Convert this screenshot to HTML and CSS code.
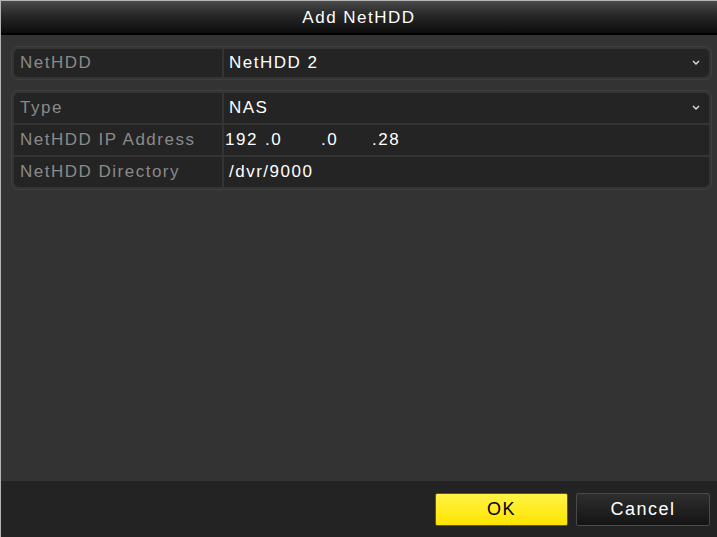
FILE: index.html
```html
<!DOCTYPE html>
<html lang="en">
<head>
<meta charset="UTF-8">
<meta name="viewport" content="width=device-width, initial-scale=1.0">
<title>Add NetHDD</title>
<link rel="stylesheet" href="styles.css">
</head>
<body>

<div class="dialog">
    <div class="dialog-title">Add NetHDD</div>

    <div class="dialog-body">
        <div class="field-group">
            <div class="field-row short">
                <div class="field-label">NetHDD</div>
                <div class="field-value has-arrow">
                    <span>NetHDD 2</span>
                    <svg class="arrow" width="8" height="6" viewBox="0 0 8 6"><polyline points="1,1 4,4 7,1" fill="none" stroke="#d8d8d8" stroke-width="1.5"/></svg>
                </div>
            </div>
        </div>

        <div class="field-group">
            <div class="field-row">
                <div class="field-label">Type</div>
                <div class="field-value has-arrow">
                    <span>NAS</span>
                    <svg class="arrow" width="8" height="6" viewBox="0 0 8 6"><polyline points="1,1 4,4 7,1" fill="none" stroke="#d8d8d8" stroke-width="1.5"/></svg>
                </div>
            </div>
            <div class="field-row">
                <div class="field-label">NetHDD IP Address</div>
                <div class="field-value ip">
                    <span class="octet o1">192</span><span class="octet o2">.0</span><span class="octet o3">.0</span><span class="octet">.28</span>
                </div>
            </div>
            <div class="field-row">
                <div class="field-label">NetHDD Directory</div>
                <div class="field-value">/dvr/9000</div>
            </div>
        </div>
    </div>

    <div class="dialog-footer">
        <button class="btn btn-ok">OK</button>
        <button class="btn btn-cancel">Cancel</button>
    </div>
</div>

</body>
</html>
```

FILE: styles.css
```css
/* NVR style dialog */
html, body {
    margin: 0;
    padding: 0;
    background: #323232;
}

.dialog {
    width: 716px;
    height: 536px;
    display: flex;
    flex-direction: column;
    border-top: 1px solid #b4b4b4;
    border-left: 1px solid #b4b4b4;
    background: #333333;
    font-family: "Liberation Sans", Arial, sans-serif;
    font-size: 17px;
    letter-spacing: 1.5px;
}

.dialog-title {
    height: 32px;
    line-height: 33px;
    text-align: center;
    color: #ffffff;
    background: linear-gradient(#4a4a4a, #2a2a2a 40%, #0c0c0c);
    border-bottom: 2px solid #000;
    letter-spacing: 1.5px;
}

.dialog-body {
    flex: 1;
    padding: 11px 5px 0 10px;
    display: flex;
    flex-direction: column;
    gap: 10px;
}

.field-group {
    display: flex;
    flex-direction: column;
    gap: 2px;
    padding: 2px;
    background: #343434;
    border: 1px solid #3f3f3f;
    border-radius: 7px;
}

.field-row {
    display: flex;
    gap: 2px;
    height: 30px;
}

.field-row.short {
    height: 28px;
}

.field-row:first-child .field-label {
    border-top-left-radius: 5px;
}

.field-row:last-child .field-label {
    border-bottom-left-radius: 5px;
}

.field-row:first-child .field-value {
    border-top-right-radius: 5px;
}

.field-row:last-child .field-value {
    border-bottom-right-radius: 5px;
}

.field-label {
    width: 202px;
    padding-left: 6px;
    background: #242424;
    color: #8a8a8a;
    display: flex;
    align-items: center;
}

.field-value {
    flex: 1;
    display: flex;
    align-items: center;
    padding: 0 9px 0 5px;
    background: #242424;
    color: #ffffff;
}

.has-arrow {
    justify-content: space-between;
}

.ip {
    padding-left: 1px;
}

.ip .octet {
    flex-shrink: 0;
}

.ip .o1 {
    width: 40px;
}

.ip .o2 {
    width: 56px;
}

.ip .o3 {
    width: 51px;
}

.dialog-footer {
    height: 56px;
    background: #232323;
    display: flex;
    justify-content: flex-end;
    align-items: flex-start;
    gap: 8px;
    padding: 12px 7px 0 0;
    box-sizing: border-box;
}

.btn {
    height: 33px;
    font-family: "Liberation Sans", Arial, sans-serif;
    font-size: 18px;
    letter-spacing: 1.5px;
    border-radius: 2px;
    cursor: pointer;
}

.btn-ok {
    width: 133px;
    color: #000;
    background: linear-gradient(#fff345, #ffe400);
    border: 1px solid #5c5a20;
}

.btn-cancel {
    width: 134px;
    color: #ffffff;
    background: linear-gradient(#2e2e2e, #141414);
    border: 1px solid #4a4a4a;
}
```
